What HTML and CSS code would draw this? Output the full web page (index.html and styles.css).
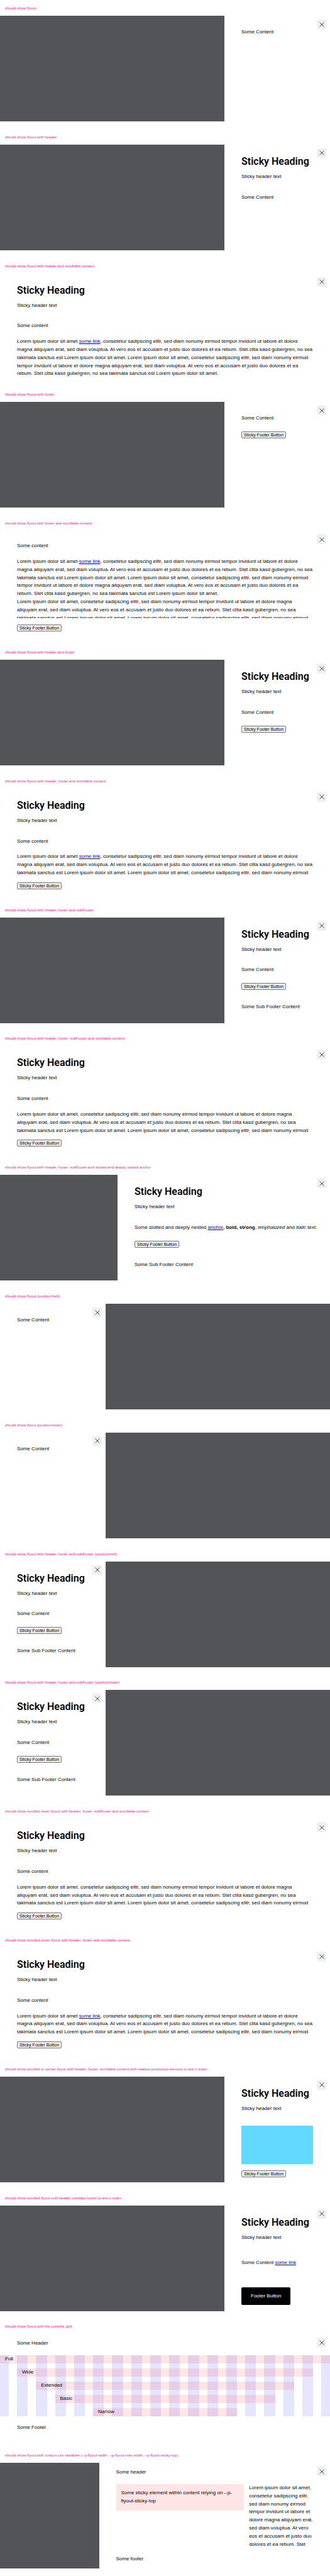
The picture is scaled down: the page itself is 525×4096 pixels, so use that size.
FILE: index.html
```html
<!DOCTYPE html>
<html lang="en">
<head>
<meta charset="utf-8">
<meta name="viewport" content="width=device-width, initial-scale=1">
<title>Flyout</title>
<link rel="stylesheet" href="styles.css">
</head>
<body>
<svg class="sprite" aria-hidden="true"><symbol id="close" viewBox="0 0 16 16"><path d="M1 1 L15 15 M15 1 L1 15" fill="none" stroke="#010205" stroke-width="1.4"/></symbol></svg>

<section class="case">
  <h1 class="label">should show flyout</h1>
  <div class="stage"><div class="panel">
    <button class="close" aria-label="Dismiss"><svg class="icon"><use href="#close"/></svg></button>
    <div class="content">Some Content</div>
  </div></div>
</section>

<section class="case">
  <h1 class="label">should show flyout with header</h1>
  <div class="stage"><div class="panel">
    <button class="close" aria-label="Dismiss"><svg class="icon"><use href="#close"/></svg></button>
    <header class="header"><h2 class="heading">Sticky Heading</h2><p>Sticky header text</p></header>
    <div class="content">Some Content</div>
  </div></div>
</section>

<section class="case">
  <h1 class="label">should show flyout with header and scrollable content</h1>
  <div class="stage"><div class="panel">
    <button class="close" aria-label="Dismiss"><svg class="icon"><use href="#close"/></svg></button>
    <header class="header"><h2 class="heading">Sticky Heading</h2><p>Sticky header text</p></header>
    <div class="content">Some content
      <p class="copy">Lorem ipsum dolor sit amet <a href="#">some link</a>, consetetur sadipscing elitr, sed diam nonumy eirmod tempor invidunt ut labore et dolore magna aliquyam erat, sed diam voluptua. At vero eos et accusam et justo duo dolores et ea rebum. Stet clita kasd gubergren, no sea takimata sanctus est Lorem ipsum dolor sit amet. Lorem ipsum dolor sit amet, consetetur sadipscing elitr, sed diam nonumy eirmod tempor invidunt ut labore et dolore magna aliquyam erat, sed diam voluptua. At vero eos et accusam et justo duo dolores et ea rebum. Stet clita kasd gubergren, no sea takimata sanctus est Lorem ipsum dolor sit amet.</p>
    </div>
  </div></div>
</section>

<section class="case">
  <h1 class="label">should show flyout with footer</h1>
  <div class="stage"><div class="panel">
    <button class="close" aria-label="Dismiss"><svg class="icon"><use href="#close"/></svg></button>
    <div class="content">Some Content</div>
    <footer class="footer"><button class="button">Sticky Footer Button</button></footer>
  </div></div>
</section>

<section class="case">
  <h1 class="label">should show flyout with footer and scrollable content</h1>
  <div class="stage"><div class="panel">
    <button class="close" aria-label="Dismiss"><svg class="icon"><use href="#close"/></svg></button>
    <div class="content content--long">Some content
      <p class="copy">Lorem ipsum dolor sit amet <a href="#">some link</a>, consetetur sadipscing elitr, sed diam nonumy eirmod tempor invidunt ut labore et dolore magna aliquyam erat, sed diam voluptua. At vero eos et accusam et justo duo dolores et ea rebum. Stet clita kasd gubergren, no sea takimata sanctus est Lorem ipsum dolor sit amet. Lorem ipsum dolor sit amet, consetetur sadipscing elitr, sed diam nonumy eirmod tempor invidunt ut labore et dolore magna aliquyam erat, sed diam voluptua. At vero eos et accusam et justo duo dolores et ea rebum. Stet clita kasd gubergren, no sea takimata sanctus est Lorem ipsum dolor sit amet.<br>Lorem ipsum dolor sit amet, consetetur sadipscing elitr, sed diam nonumy eirmod tempor invidunt ut labore et dolore magna aliquyam erat, sed diam voluptua. At vero eos et accusam et justo duo dolores et ea rebum. Stet clita kasd gubergren, no sea takimata sanctus est Lorem ipsum dolor sit amet. Lorem ipsum dolor sit amet, consetetur sadipscing elitr, sed diam nonumy eirmod</p>
    </div>
    <footer class="footer"><button class="button">Sticky Footer Button</button></footer>
  </div></div>
</section>

<section class="case">
  <h1 class="label">should show flyout with header and footer</h1>
  <div class="stage"><div class="panel">
    <button class="close" aria-label="Dismiss"><svg class="icon"><use href="#close"/></svg></button>
    <header class="header"><h2 class="heading">Sticky Heading</h2><p>Sticky header text</p></header>
    <div class="content">Some Content</div>
    <footer class="footer"><button class="button">Sticky Footer Button</button></footer>
  </div></div>
</section>

<section class="case">
  <h1 class="label">should show flyout with header, footer and scrollable content</h1>
  <div class="stage"><div class="panel">
    <button class="close" aria-label="Dismiss"><svg class="icon"><use href="#close"/></svg></button>
    <header class="header"><h2 class="heading">Sticky Heading</h2><p>Sticky header text</p></header>
    <div class="content">Some content
      <p class="copy">Lorem ipsum dolor sit amet <a href="#">some link</a>, consetetur sadipscing elitr, sed diam nonumy eirmod tempor invidunt ut labore et dolore magna aliquyam erat, sed diam voluptua. At vero eos et accusam et justo duo dolores et ea rebum. Stet clita kasd gubergren, no sea takimata sanctus est Lorem ipsum dolor sit amet. Lorem ipsum dolor sit amet, consetetur sadipscing elitr, sed diam nonumy eirmod tempor invidunt ut labore</p>
    </div>
    <footer class="footer"><button class="button">Sticky Footer Button</button></footer>
  </div></div>
</section>

<section class="case">
  <h1 class="label">should show flyout with header, footer and subFooter</h1>
  <div class="stage"><div class="panel">
    <button class="close" aria-label="Dismiss"><svg class="icon"><use href="#close"/></svg></button>
    <header class="header"><h2 class="heading">Sticky Heading</h2><p>Sticky header text</p></header>
    <div class="content">Some Content</div>
    <footer class="footer"><button class="button">Sticky Footer Button</button></footer>
    <div class="subfooter">Some Sub Footer Content</div>
  </div></div>
</section>

<section class="case">
  <h1 class="label">should show flyout with header, footer, subFooter and scrollable content</h1>
  <div class="stage"><div class="panel">
    <button class="close" aria-label="Dismiss"><svg class="icon"><use href="#close"/></svg></button>
    <header class="header"><h2 class="heading">Sticky Heading</h2><p>Sticky header text</p></header>
    <div class="content">Some content
      <p class="copy">Lorem ipsum dolor sit amet, consetetur sadipscing elitr, sed diam nonumy eirmod tempor invidunt ut labore et dolore magna aliquyam erat, sed diam voluptua. At vero eos et accusam et justo duo dolores et ea rebum. Stet clita kasd gubergren, no sea takimata sanctus est Lorem ipsum dolor sit amet. Lorem ipsum dolor sit amet, consetetur sadipscing elitr, sed diam nonumy eirmod tempor invidunt ut labore</p>
    </div>
    <footer class="footer"><button class="button">Sticky Footer Button</button></footer>
  </div></div>
</section>

<section class="case">
  <h1 class="label">should show flyout with header, footer, subFooter and slotted and deeply nested anchor</h1>
  <div class="stage"><div class="panel panel--medium">
    <button class="close" aria-label="Dismiss"><svg class="icon"><use href="#close"/></svg></button>
    <header class="header"><h2 class="heading">Sticky Heading</h2><p>Sticky header text</p></header>
    <div class="content">Some slotted and deeply nested <a href="#">anchor</a><b>, bold, </b><strong>strong</strong>, <em>emphasized</em> and <i>italic</i> text.</div>
    <footer class="footer"><button class="button">Sticky Footer Button</button></footer>
    <div class="subfooter">Some Sub Footer Content</div>
  </div></div>
</section>

<section class="case">
  <h1 class="label">should show flyout (position=left)</h1>
  <div class="stage stage--start"><div class="panel">
    <button class="close" aria-label="Dismiss"><svg class="icon"><use href="#close"/></svg></button>
    <div class="content">Some Content</div>
  </div></div>
</section>

<section class="case">
  <h1 class="label">should show flyout (position=start)</h1>
  <div class="stage stage--start"><div class="panel">
    <button class="close" aria-label="Dismiss"><svg class="icon"><use href="#close"/></svg></button>
    <div class="content">Some Content</div>
  </div></div>
</section>

<section class="case">
  <h1 class="label">should show flyout with header, footer and subFooter (position=left)</h1>
  <div class="stage stage--start"><div class="panel">
    <button class="close" aria-label="Dismiss"><svg class="icon"><use href="#close"/></svg></button>
    <header class="header"><h2 class="heading">Sticky Heading</h2><p>Sticky header text</p></header>
    <div class="content">Some Content</div>
    <footer class="footer"><button class="button">Sticky Footer Button</button></footer>
    <div class="subfooter">Some Sub Footer Content</div>
  </div></div>
</section>

<section class="case">
  <h1 class="label">should show flyout with header, footer and subFooter (position=start)</h1>
  <div class="stage stage--start"><div class="panel">
    <button class="close" aria-label="Dismiss"><svg class="icon"><use href="#close"/></svg></button>
    <header class="header"><h2 class="heading">Sticky Heading</h2><p>Sticky header text</p></header>
    <div class="content">Some Content</div>
    <footer class="footer"><button class="button">Sticky Footer Button</button></footer>
    <div class="subfooter">Some Sub Footer Content</div>
  </div></div>
</section>

<section class="case">
  <h1 class="label">should show scrolled down flyout with header, footer, subFooter and scrollable content</h1>
  <div class="stage"><div class="panel">
    <button class="close" aria-label="Dismiss"><svg class="icon"><use href="#close"/></svg></button>
    <header class="header"><h2 class="heading">Sticky Heading</h2><p>Sticky header text</p></header>
    <div class="content">Some content
      <p class="copy">Lorem ipsum dolor sit amet, consetetur sadipscing elitr, sed diam nonumy eirmod tempor invidunt ut labore et dolore magna aliquyam erat, sed diam voluptua. At vero eos et accusam et justo duo dolores et ea rebum. Stet clita kasd gubergren, no sea takimata sanctus est Lorem ipsum dolor sit amet. Lorem ipsum dolor sit amet, consetetur sadipscing elitr, sed diam nonumy eirmod tempor invidunt ut labore</p>
    </div>
    <footer class="footer"><button class="button">Sticky Footer Button</button></footer>
  </div></div>
</section>

<section class="case">
  <h1 class="label">should show scrolled down flyout with header, footer and scrollable content</h1>
  <div class="stage"><div class="panel">
    <button class="close" aria-label="Dismiss"><svg class="icon"><use href="#close"/></svg></button>
    <header class="header"><h2 class="heading">Sticky Heading</h2><p>Sticky header text</p></header>
    <div class="content">Some content
      <p class="copy">Lorem ipsum dolor sit amet <a href="#">some link</a>, consetetur sadipscing elitr, sed diam nonumy eirmod tempor invidunt ut labore et dolore magna aliquyam erat, sed diam voluptua. At vero eos et accusam et justo duo dolores et ea rebum. Stet clita kasd gubergren, no sea takimata sanctus est Lorem ipsum dolor sit amet. Lorem ipsum dolor sit amet, consetetur sadipscing elitr, sed diam nonumy eirmod tempor invidunt ut labore</p>
    </div>
    <footer class="footer"><button class="button">Sticky Footer Button</button></footer>
  </div></div>
</section>

<section class="case">
  <h1 class="label">should show scrolled to center flyout with header, footer, scrollable content with relative positioned element to test z-index</h1>
  <div class="stage"><div class="panel">
    <button class="close" aria-label="Dismiss"><svg class="icon"><use href="#close"/></svg></button>
    <header class="header"><h2 class="heading">Sticky Heading</h2><p>Sticky header text</p></header>
    <div class="content"><div class="block"></div></div>
    <footer class="footer"><button class="button">Sticky Footer Button</button></footer>
  </div></div>
</section>

<section class="case">
  <h1 class="label">should show scrolled flyout until header overlaps footer to test z-index</h1>
  <div class="stage"><div class="panel">
    <button class="close" aria-label="Dismiss"><svg class="icon"><use href="#close"/></svg></button>
    <header class="header"><h2 class="heading">Sticky Heading</h2><p>Sticky header text</p></header>
    <div class="content content--spaced">Some Content <a href="#">some link</a></div>
    <footer class="footer"><button class="button button--primary">Footer Button</button></footer>
  </div></div>
</section>

<section class="case">
  <h1 class="label">should show flyout with the porsche grid</h1>
  <div class="stage"><div class="panel panel--full">
    <button class="close" aria-label="Dismiss"><svg class="icon"><use href="#close"/></svg></button>
    <header class="header header--plain">Some Header</header>
    <div class="content content--grid">
      <div class="columns"><span></span><span></span><span></span><span></span><span></span><span></span><span></span><span></span><span></span><span></span><span></span><span></span><span></span><span></span><span></span><span></span><span></span><span></span></div>
      <div class="bar bar--full">Full</div>
      <div class="bar bar--wide">Wide</div>
      <div class="bar bar--extended">Extended</div>
      <div class="bar bar--basic">Basic</div>
      <div class="bar bar--narrow">Narrow</div>
    </div>
    <footer class="footer">Some Footer</footer>
  </div></div>
</section>

<section class="case">
  <h1 class="label">should show flyout with custom css variables (--p-flyout-width, --p-flyout-max-width, --p-flyout-sticky-top)</h1>
  <div class="stage"><div class="panel panel--custom">
    <button class="close" aria-label="Dismiss"><svg class="icon"><use href="#close"/></svg></button>
    <header class="header header--plain">Some header</header>
    <div class="content content--split">
      <div class="note">Some sticky element within content relying on --p-flyout-sticky-top</div>
      <p>Lorem ipsum dolor sit amet, consetetur sadipscing elitr, sed diam nonumy eirmod tempor invidunt ut labore et dolore magna aliquyam erat, sed diam voluptua. At vero eos et accusam et justo duo dolores et ea rebum. Stet clita kasd gubergren</p>
    </div>
    <footer class="footer">Some footer</footer>
  </div></div>
</section>
</body>
</html>
```
FILE: styles.css
```css
* {
  box-sizing: border-box;
}

body {
  display: grid;
  grid-auto-rows: 1fr;
  min-height: 100vh;
  margin: 0;
  background: #fff;
  color: #010205;
  font: 8px/1.6 "Liberation Sans", Arial, sans-serif;
}

p {
  margin: 0;
}

a {
  color: #00e;
}

.sprite {
  position: absolute;
  width: 0;
  height: 0;
}

.label {
  height: 25px;
  margin: 0;
  padding-left: 8px;
  color: #ff1493;
  font-size: 6px;
  font-weight: 400;
  line-height: 26px;
  white-space: nowrap;
}

.stage {
  display: flex;
  justify-content: flex-end;
  height: 168px;
  background: #535457;
}

.stage--start {
  justify-content: flex-start;
}

.panel {
  position: relative;
  min-width: 168px;
  overflow: hidden;
  background: #fff;
}

.panel--medium {
  width: 338px;
  white-space: nowrap;
}

.panel--full {
  width: 100%;
}

.panel--custom {
  width: 70%;
}

.close {
  position: absolute;
  z-index: 3;
  top: 6px;
  right: 6px;
  display: grid;
  place-items: center;
  width: 15px;
  height: 15px;
  padding: 0;
  border: 0;
  border-radius: 2px;
  background: #eeeff2;
}

.icon {
  width: 8px;
  height: 8px;
}

.header {
  position: sticky;
  z-index: 2;
  top: 0;
  padding: 16px 27px 0;
  background: #fff;
}

.header--plain {
  padding: 9px 27px 12px;
}

.heading {
  margin: 0 0 8px;
  font-family: Roboto, "Liberation Sans", sans-serif;
  font-size: 16px;
  font-weight: 600;
  line-height: 21px;
}

.content {
  padding: 20px 27px 4px;
}

.content--long {
  padding-top: 18px;
}

.content--spaced {
  padding-top: 28px;
  padding-bottom: 24px;
}

.copy {
  margin-top: 12px;
}

.footer {
  position: sticky;
  z-index: 1;
  bottom: 0;
  display: flex;
  align-items: flex-end;
  min-height: 29px;
  padding: 8px 27px;
  background: #fff;
}

.subfooter {
  padding: 13px 27px;
}

.button {
  height: 11px;
  padding: 0 3px;
  border: 1px solid #767676;
  border-radius: 2px;
  background: #efefef;
  color: #000;
  font: 7px/9px "Liberation Sans", Arial, sans-serif;
}

.button--primary {
  height: 28px;
  padding: 0 15px;
  border: 0;
  background: #010205;
  color: #fff;
  font-size: 8px;
  line-height: 28px;
}

.block {
  height: 84px;
  background: #62d9ff;
}

.content--grid {
  display: grid;
  grid-template-columns: 14px repeat(16, minmax(0, 1fr)) 14px;
  grid-template-rows: repeat(5, 13px);
  gap: 8px 13px;
  padding: 0 0 4px;
}

.columns {
  display: grid;
  grid-area: 1 / 1 / -1 / -1;
  grid-template-columns: subgrid;
}

.columns span {
  background: rgba(0, 0, 255, 0.1);
}

.bar {
  padding-left: 8px;
  background: rgba(255, 0, 0, 0.1);
}

.bar--full {
  grid-area: 1 / 1 / 2 / -1;
}

.bar--wide {
  grid-area: 2 / 2 / 3 / -2;
}

.bar--extended {
  grid-area: 3 / 3 / 4 / -3;
}

.bar--basic {
  grid-area: 4 / 4 / 5 / -4;
}

.bar--narrow {
  grid-area: 5 / 6 / 6 / -6;
}

.content--split {
  display: grid;
  grid-template-columns: 2fr 1fr;
  align-items: start;
  gap: 8px;
  padding-top: 0;
}

.note {
  padding: 8px;
  background: #ffe5e5;
}
```
